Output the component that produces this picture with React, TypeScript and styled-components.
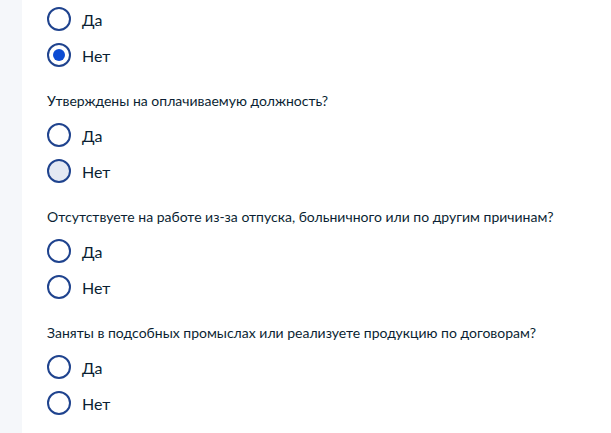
import React from 'react';
import styled, { createGlobalStyle } from 'styled-components';

const Global = createGlobalStyle`
    html, body {
        margin: 0;
        padding: 0;
        background: #ffffff;
    }
    body {
        font-family: Lato, "Noto Sans", Arial, sans-serif;
        color: #0b1f33;
    }
`;

const Page = styled.div`
    display: flex;
    min-height: 433px;
`;

const Side = styled.div`
    width: 22px;
    flex-shrink: 0;
    background: #f5f7fa;
`;

const Content = styled.div`
    flex: 1;
    padding: 1px 0 0 25px;
    display: flex;
    flex-direction: column;
`;

const Group = styled.div`
    display: flex;
    flex-direction: column;
    & + & {
        margin-top: 19px;
    }
`;

const Question = styled.div`
    font-size: 14px;
    line-height: 18px;
    color: #0b1f33;
    margin-bottom: 7px;
`;

const Option = styled.label`
    display: flex;
    align-items: center;
    height: 36px;
    gap: 11px;
    font-size: 16px;
    cursor: pointer;
`;

const Circle = styled.span<{ $checked?: boolean; $hover?: boolean }>`
    box-sizing: border-box;
    width: 24px;
    height: 24px;
    border-radius: 50%;
    border: 2px solid #1f438e;
    background: ${p => (p.$hover ? '#e4e9f3' : '#ffffff')};
    display: flex;
    align-items: center;
    justify-content: center;

    &::after {
        content: '';
        display: ${p => (p.$checked ? 'block' : 'none')};
        width: 12px;
        height: 12px;
        border-radius: 50%;
        background: #0d4cd3;
    }
`;

interface QuestionData {
    title?: string;
    value?: 'yes' | 'no';
    hover?: 'yes' | 'no';
}

const questions: QuestionData[] = [
    { value: 'no' },
    { title: 'Утверждены на оплачиваемую должность?', hover: 'no' },
    { title: 'Отсутствуете на работе из-за отпуска, больничного или по другим причинам?' },
    { title: 'Заняты в подсобных промыслах или реализуете продукцию по договорам?' },
];

export default function App() {
    return (
        <>
            <Global />
            <Page>
                <Side />
                <Content>
                    {questions.map((q, i) => (
                        <Group key={i}>
                            {q.title && <Question>{q.title}</Question>}
                            <Option>
                                <Circle $checked={q.value === 'yes'} $hover={q.hover === 'yes'} />
                                Да
                            </Option>
                            <Option>
                                <Circle $checked={q.value === 'no'} $hover={q.hover === 'no'} />
                                Нет
                            </Option>
                        </Group>
                    ))}
                </Content>
            </Page>
        </>
    );
}
